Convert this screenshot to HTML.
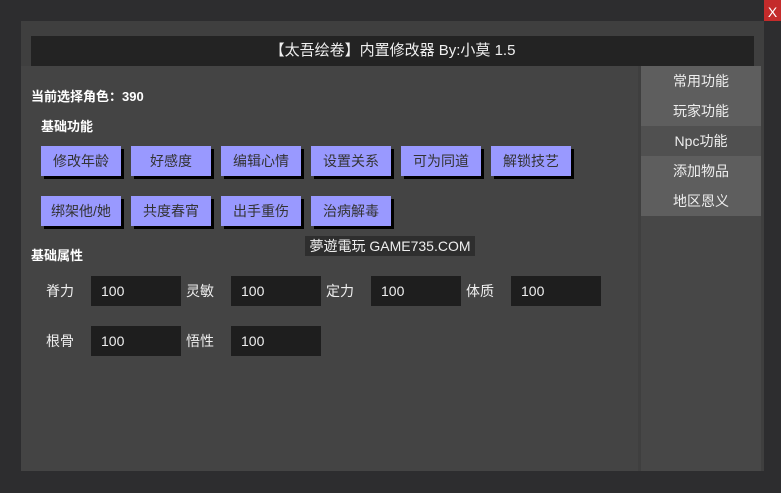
<!DOCTYPE html>
<html><head><meta charset="utf-8"><style>
*{margin:0;padding:0;box-sizing:border-box}
body{width:781px;height:493px;background:#2d2d2f;position:relative;overflow:hidden;font-family:"Liberation Sans","Noto Sans CJK SC",sans-serif;color:#fff}
div{position:absolute}
.x{left:764px;top:0;width:17px;height:21px;background:#c42b2b;font-size:14px;text-align:center;line-height:24px;color:#fff}
.panel{left:21px;top:21px;width:743px;height:450px;background:#3f3f3f}
.title{left:31px;top:36px;width:723px;height:30px;background:#232323;font-size:15px;text-align:center;line-height:30px;color:#f0f0f0}
.content{left:21px;top:66px;width:617px;height:405px;background:#444}
.side{left:641px;top:66px;width:120px;height:405px;background:#474747}
.si{left:0;width:120px;height:30px;background:#5e5e5e;font-size:14px;text-align:center;line-height:30px;color:#eee}
.b{width:80px;height:30px;background:#9999ff;box-shadow:3px 3px 0 #000;color:#333;font-size:14px;text-align:center;line-height:30px}
.lbl{font-size:14px;font-weight:bold;color:#fff}
.in{width:90px;height:30px;background:#1e1e1e;color:#eee;font-size:14px;line-height:30px;padding-left:10px}
.l{font-size:14px;line-height:30px;color:#eee}
.wm{left:305px;top:236px;width:170px;height:20px;background:#2e2e2e;font-size:14px;line-height:20px;text-align:center;color:#eee}
</style></head><body>
<div class="x">X</div>
<div class="panel"></div>
<div class="title">【太吾绘卷】内置修改器 By:小莫 1.5</div>
<div class="content"></div>
<div class="side">
<div class="si" style="top:0">常用功能</div>
<div class="si" style="top:30px">玩家功能</div>
<div class="si" style="top:60px;background:#505050">Npc功能</div>
<div class="si" style="top:90px">添加物品</div>
<div class="si" style="top:120px">地区恩义</div>
</div>
<div class="lbl" style="left:31px;top:86px;font-size:13px">当前选择角色：390</div>
<div class="lbl" style="left:41px;top:116px;font-size:13px">基础功能</div>
<div class="b" style="left:41px;top:146px">修改年龄</div>
<div class="b" style="left:131px;top:146px">好感度</div>
<div class="b" style="left:221px;top:146px">编辑心情</div>
<div class="b" style="left:311px;top:146px">设置关系</div>
<div class="b" style="left:401px;top:146px">可为同道</div>
<div class="b" style="left:491px;top:146px">解锁技艺</div>
<div class="b" style="left:41px;top:196px">绑架他/她</div>
<div class="b" style="left:131px;top:196px">共度春宵</div>
<div class="b" style="left:221px;top:196px">出手重伤</div>
<div class="b" style="left:311px;top:196px">治病解毒</div>
<div class="wm">夢遊電玩 GAME735.COM</div>
<div class="lbl" style="left:31px;top:245px;font-size:13px">基础属性</div>
<div class="l" style="left:46px;top:276px">脊力</div><div class="in" style="left:91px;top:276px">100</div>
<div class="l" style="left:186px;top:276px">灵敏</div><div class="in" style="left:231px;top:276px">100</div>
<div class="l" style="left:326px;top:276px">定力</div><div class="in" style="left:371px;top:276px">100</div>
<div class="l" style="left:466px;top:276px">体质</div><div class="in" style="left:511px;top:276px">100</div>
<div class="l" style="left:46px;top:326px">根骨</div><div class="in" style="left:91px;top:326px">100</div>
<div class="l" style="left:186px;top:326px">悟性</div><div class="in" style="left:231px;top:326px">100</div>
</body></html>
